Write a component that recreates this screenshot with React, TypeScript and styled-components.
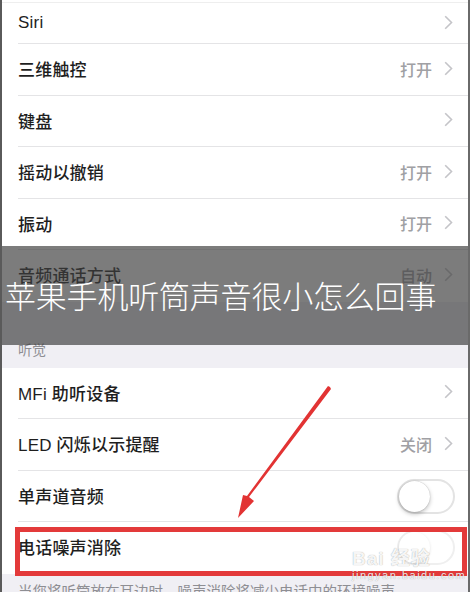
import React from 'react';
import styled, { createGlobalStyle } from 'styled-components';

const GlobalStyle = createGlobalStyle`
    html, body {
        margin: 0;
        padding: 0;
        background: #ffffff;
    }
    body {
        font-family: "Liberation Sans", "Noto Sans CJK SC", sans-serif;
    }
`;

// styled components
const Page = styled.div`
    position: relative;
    width: 470px;
    height: 592px;
    overflow: hidden;
    background: #ffffff;
    border-left: 2px solid #5a5a5a;
    border-right: 2px solid #6a6a6a;
    box-sizing: border-box;
`;

const Group = styled.div<{ $top?: boolean }>`
    display: flex;
    flex-direction: column;
    background: #ffffff;
    padding-top: ${p => (p.$top ? '2px' : '0')};
`;

const Row = styled.div<{ $first?: boolean; $last?: boolean }>`
    position: relative;
    display: flex;
    align-items: center;
    height: ${p => (p.$first ? '42px' : '51.5px')};
    padding: 0 14px 0 16px;
    border-top: ${p => (p.$first ? '1px solid #eeeeee' : 'none')};
    box-sizing: border-box;

    &::after {
        content: '';
        display: ${p => (p.$last ? 'none' : 'block')};
        position: absolute;
        left: 16px;
        right: 0;
        bottom: 0;
        height: 1px;
        background: #e4e4e6;
    }
`;

const Label = styled.span`
    flex: 1;
    font-size: 17px;
    font-weight: 500;
    color: #1e1e1e;
    margin-top: -2px;
    letter-spacing: 0.2px;
`;

const Value = styled.span`
    font-size: 16px;
    font-weight: 500;
    color: #a0a0a4;
    margin-right: 12px;
    margin-top: -2px;
`;

const Chevron = styled.svg`
    width: 9px;
    height: 15px;
    margin-right: 1px;
    margin-top: -3px;
`;

const Toggle = styled.div<{ $faint?: boolean }>`
    position: relative;
    width: 58px;
    height: 35px;
    margin-right: -1px;
    border-radius: 18px;
    border: 2px solid ${p => (p.$faint ? '#efefef' : '#e3e3e3')};
    background: #ffffff;
    box-sizing: border-box;

    &::before {
        content: '';
        position: absolute;
        left: 0;
        top: 0;
        width: 31px;
        height: 31px;
        border-radius: 50%;
        background: #ffffff;
        box-shadow: ${p =>
            p.$faint
                ? '0 1px 3px rgba(0, 0, 0, 0.12)'
                : '0 2px 4px rgba(0, 0, 0, 0.25), 0 0 1px rgba(0, 0, 0, 0.3)'};
    }
`;

const SectionHeader = styled.div`
    display: flex;
    align-items: flex-end;
    height: 66px;
    padding: 0 0 9px 16px;
    box-sizing: border-box;
    background: #f0eff4;
    font-size: 14px;
    color: #8e8e93;
`;

const Footer = styled.div`
    background: #f0eff4;
    padding: 6px 0 0 16px;
    height: 40px;
    font-size: 14.5px;
    color: #8e8e93;
    white-space: nowrap;
`;

const Banner = styled.div`
    position: absolute;
    left: 0;
    right: 0;
    top: 246px;
    height: 99px;
    display: flex;
    align-items: center;
    padding-left: 3px;
    padding-bottom: 2px;
    box-sizing: border-box;
    background: rgba(62, 62, 62, 0.68);
    color: #ffffff;
    font-family: "Noto Sans CJK SC", sans-serif;
    font-size: 31px;
    font-weight: 300;
    letter-spacing: -0.2px;
`;

const Highlight = styled.div`
    position: absolute;
    left: 13px;
    top: 5px;
    right: 1px;
    bottom: -2px;
    border: 5px solid #e33a3a;
`;

const Arrow = styled.svg`
    position: absolute;
    left: 0;
    top: 0;
    width: 470px;
    height: 592px;
    pointer-events: none;
`;

const Watermark = styled.div`
    position: absolute;
    left: 350px;
    top: 543px;
    display: flex;
    flex-direction: column;
    align-items: flex-start;
    color: rgba(255, 255, 255, 0.92);
    text-shadow: 0 0 1px rgba(0, 0, 0, 0.4);
    pointer-events: none;
`;

const WmBrand = styled.div`
    font-family: "Liberation Sans", "Noto Sans CJK SC", sans-serif;
    font-size: 19px;
    font-weight: 700;
    letter-spacing: 1px;
`;

const WmUrl = styled.div`
    font-size: 11px;
    margin-top: -1px;
    letter-spacing: 1.5px;
`;

type Item = { label: string; value?: string; kind: 'chevron' | 'toggle' };

const top: Item[] = [
    { label: 'Siri', kind: 'chevron' },
    { label: '三维触控', value: '打开', kind: 'chevron' },
    { label: '键盘', kind: 'chevron' },
    { label: '摇动以撤销', value: '打开', kind: 'chevron' },
    { label: '振动', value: '打开', kind: 'chevron' },
    { label: '音频通话方式', value: '自动', kind: 'chevron' },
];

const hearing: Item[] = [
    { label: 'MFi 助听设备', kind: 'chevron' },
    { label: 'LED 闪烁以示提醒', value: '关闭', kind: 'chevron' },
    { label: '单声道音频', kind: 'toggle' },
    { label: '电话噪声消除', kind: 'toggle' },
];

const Accessory = ({ item, faint }: { item: Item; faint?: boolean }) => {
    if (item.kind === 'toggle') return <Toggle $faint={faint} />;
    return (
        <>
            {item.value ? <Value>{item.value}</Value> : null}
            <Chevron viewBox="0 0 9 15">
                <path d="M1.2 1.2 L7.5 7.5 L1.2 13.8" fill="none" stroke="#c4c4c8" strokeWidth="1.6" />
            </Chevron>
        </>
    );
};

const App = () => {
    return (
        <Page>
            <GlobalStyle />
            <Group $top>
                {top.map((item, i) => (
                    <Row key={item.label} $first={i === 0} $last={i === top.length - 1}>
                        <Label>{item.label}</Label>
                        <Accessory item={item} />
                    </Row>
                ))}
            </Group>

            <SectionHeader>听觉</SectionHeader>

            <Group>
                {hearing.map((item, i) => {
                    const last = i === hearing.length - 1;
                    return (
                        <Row key={item.label} $last={last}>
                            <Label>{item.label}</Label>
                            <Accessory item={item} faint={last} />
                            {last ? <Highlight /> : null}
                        </Row>
                    );
                })}
            </Group>

            <Footer>当您将听筒放在耳边时，噪声消除将减少电话中的环境噪声。</Footer>

            <Banner>苹果手机听筒声音很小怎么回事</Banner>

            <Arrow viewBox="0 0 470 592">
                <polygon
                    points="328,387 329,389 247,497 252,501 236,518 241,495 245,496 326,386"
                    fill="#e23333"
                />
            </Arrow>

            <Watermark>
                <WmBrand>Bai 经验</WmBrand>
                <WmUrl>jingyan.baidu.com</WmUrl>
            </Watermark>
        </Page>
    );
};

export default App;
